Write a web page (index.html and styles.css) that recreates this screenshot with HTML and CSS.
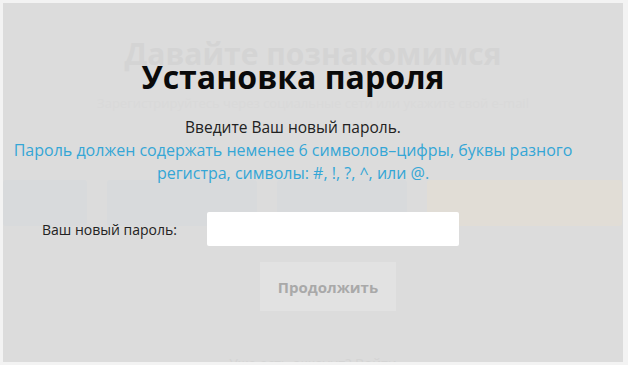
FILE: index.html
```html
<!DOCTYPE html>
<html lang="ru">
<head>
    <meta charset="UTF-8">
    <meta name="viewport" content="width=device-width, initial-scale=1.0">
    <title>Установка пароля</title>
    <link rel="stylesheet" href="styles.css">
</head>
<body>
    <div class="screen">
        <!-- страница под затемнением -->
        <div class="backdrop">
            <h2 class="bg-title">Давайте познакомимся</h2>
            <p class="bg-text">Зарегистрируйтесь через социальные сети или укажите свой e-mail</p>
            <div class="bg-buttons">
                <span class="bg-btn blue" style="width:84px"></span>
                <span class="bg-btn blue" style="width:150px"></span>
                <span class="bg-btn blue" style="width:130px"></span>
                <span class="bg-btn orange" style="width:195px"></span>
            </div>
            <p class="bg-footer">Уже есть аккаунт? Войти</p>
        </div>

        <!-- окно установки пароля -->
        <div class="modal">
            <h1 class="modal-title">Установка пароля</h1>
            <p class="intro">Введите Ваш новый пароль.</p>
            <p class="hint">Пароль должен содержать неменее 6 символов–цифры, буквы разного<br>регистра, символы: #, !, ?, ^, или @.</p>
            <div class="field">
                <label for="newPassword">Ваш новый пароль:</label>
                <input type="password" id="newPassword">
            </div>
            <div class="actions">
                <button class="continue">Продолжить</button>
            </div>
        </div>
    </div>
</body>
</html>
```
FILE: styles.css
```css
body {
    margin: 0;
    padding: 3px 5px 3px 3px;
    background: #f3f3f3;
    font-family: "Open Sans", Arial, sans-serif;
}
.screen {
    position: relative;
    height: 359px;
    background: #dcdcdc;
    overflow: hidden;
}
.backdrop {
    padding-top: 30px;
    text-align: center;
    color: #d4d4d4;
}
.bg-title {
    margin: 0;
    font-size: 30px;
    font-weight: 700;
}
.bg-text {
    margin: 20px 0 0;
    font-size: 13px;
    color: #d9d9d9;
}
.bg-buttons {
    display: flex;
    gap: 20px;
    margin-top: 68px;
}
.bg-btn {
    height: 46px;
    border-radius: 3px;
}
.bg-btn.blue {
    background: #d8dadc;
}
.bg-btn.orange {
    background: #e1ddd6;
}
.bg-footer {
    margin: 128px 0 0;
    font-size: 14px;
}
.modal {
    position: absolute;
    top: 0;
    left: 0;
    right: 0;
    padding-top: 54px;
    text-align: center;
}
.modal-title {
    margin: 0 40px 0 0;
    font-size: 32px;
    font-weight: 700;
    line-height: 40px;
    color: #0a0a0a;
}
.intro {
    margin: 19px 40px 0 0;
    font-size: 15.5px;
    line-height: 22px;
    color: #222;
}
.hint {
    margin: 1px 40px 0 0;
    font-size: 16px;
    line-height: 23px;
    color: #34a6d6;
}
.field {
    display: flex;
    align-items: center;
    margin-top: 27px;
    padding-left: 39px;
}
.field label {
    width: 165px;
    text-align: left;
    font-size: 14px;
    color: #222;
}
.field input {
    width: 252px;
    height: 34px;
    box-sizing: border-box;
    border: none;
    border-radius: 2px;
    background: #fff;
}
.actions {
    margin: 16px 0 0 30px;
}
.continue {
    width: 136px;
    height: 49px;
    border: none;
    background: #e2e2e2;
    color: #a9a9a9;
    font-family: "Open Sans", Arial, sans-serif;
    font-size: 15px;
    font-weight: 700;
}
```
